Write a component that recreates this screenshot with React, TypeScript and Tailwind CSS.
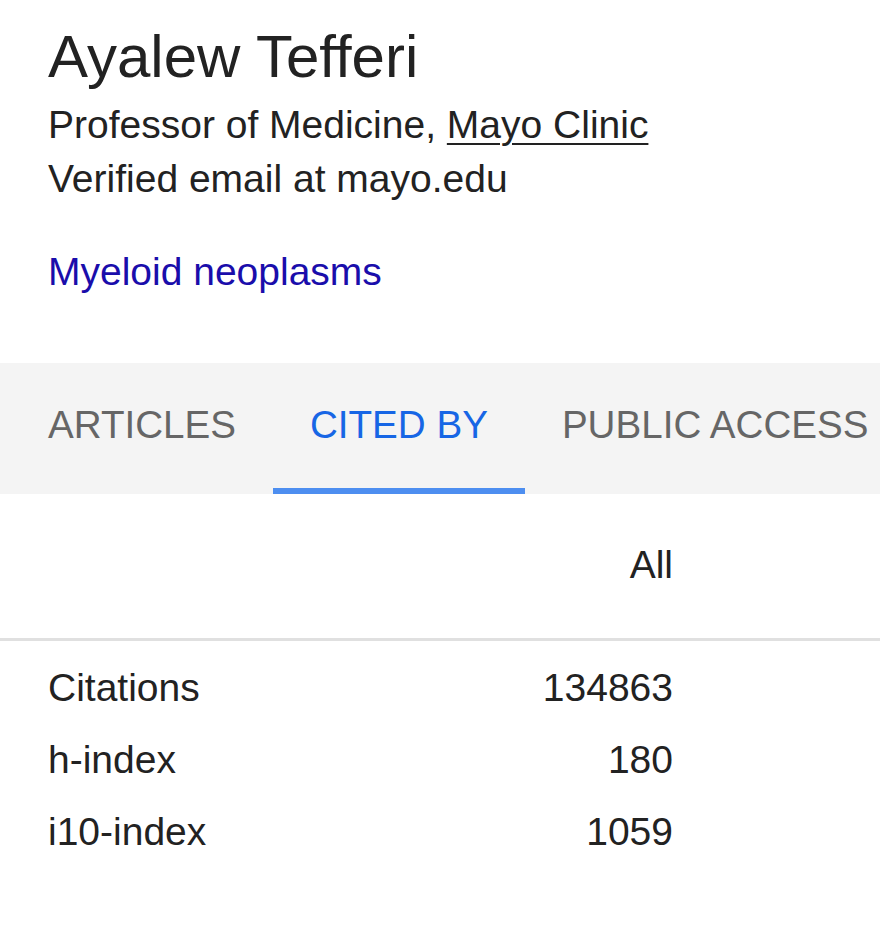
import React from "react";

const tabs = [
  { label: "ARTICLES", active: false },
  { label: "CITED BY", active: true },
  { label: "PUBLIC ACCESS", active: false },
];

const stats = [
  { name: "Citations", all: "134863" },
  { name: "h-index", all: "180" },
  { name: "i10-index", all: "1059" },
];

export default function App() {
  return (
    <div className="min-h-screen w-full overflow-hidden bg-white font-['Liberation_Sans',Arial,sans-serif] text-[#222]">
      {/* profile header */}
      <div className="pl-12 pt-[24px] pb-[64px]">
        <h1 className="text-[60px] leading-[65px] font-normal">Ayalew Tefferi</h1>
        <div className="mt-[9px] text-[39px] leading-[54px]">
          Professor of Medicine, <span className="underline underline-offset-[5px] decoration-2">Mayo Clinic</span>
        </div>
        <div className="text-[39px] leading-[54px]">Verified email at mayo.edu</div>
        <div className="mt-[39px] text-[39px] leading-[54px] text-[#1a0dab]">Myeloid neoplasms</div>
      </div>

      {/* tabs */}
      <div className="flex h-[131px] bg-[#f4f4f4] pl-[11px] whitespace-nowrap">
        {tabs.map((t) => (
          <div
            key={t.label}
            className={`flex h-full items-start px-[37px] pt-[40px] text-[38.6px] leading-[44px] ${
              t.active ? "border-b-[6px] border-[#4d8ef0] text-[#1766e5]" : "text-[#666]"
            }`}
          >
            {t.label}
          </div>
        ))}
      </div>

      {/* stats table */}
      <div className="flex h-[147px] border-b-[3px] border-[#e0e0e0]">
        <div className="w-[673px] pt-[49px] text-right text-[39px] leading-[44px]">All</div>
      </div>
      <div className="pt-[11px]">
        {stats.map((s) => (
          <div key={s.name} className="flex w-[673px] pl-12 text-[39px] leading-[72px]">
            <span className="flex-1">{s.name}</span>
            <span>{s.all}</span>
          </div>
        ))}
      </div>
    </div>
  );
}
